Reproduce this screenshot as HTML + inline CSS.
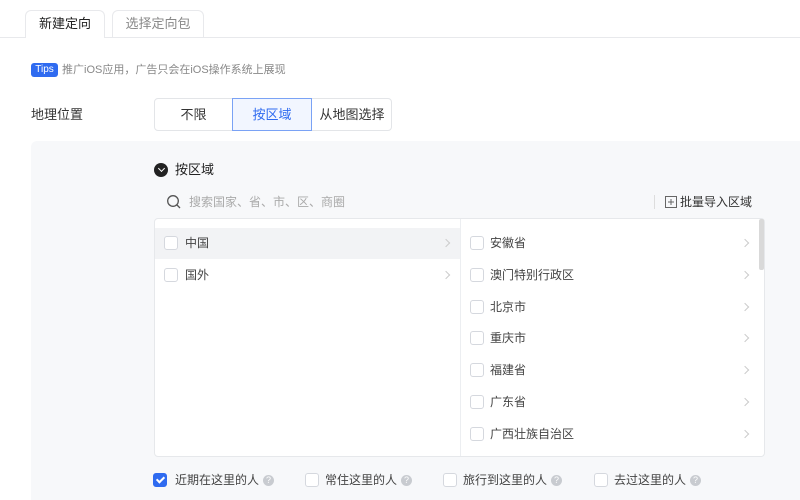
<!DOCTYPE html>
<html style="overflow:hidden;height:500px"><head><meta charset="utf-8"><style>
*{margin:0;padding:0;box-sizing:border-box}
body{width:800px;height:500px;overflow:hidden;background:#fff;font-family:"Liberation Sans","Noto Sans CJK SC",sans-serif;font-size:12px;color:#444;position:relative}
.a{position:absolute;white-space:nowrap}
.cb{position:absolute;width:14px;height:14px;border:1px solid #d5d8de;border-radius:3px;background:#fff}
.chev{position:absolute;width:6px;height:6px;border-top:1px solid #ccc;border-right:1px solid #ccc;transform:rotate(45deg)}
.q{display:inline-block;width:11px;height:11px;border-radius:50%;background:#c8cbd0;color:#fff;font-size:9px;line-height:11px;text-align:center;margin-left:4px;vertical-align:1px}
</style></head><body>
<div class="a" style="left:0;top:37px;width:800px;height:1px;background:#e8e9ec"></div>
<div class="a" style="left:25px;top:10px;width:80px;height:28px;border:1px solid #e8e9ec;border-bottom:none;border-radius:6px 6px 0 0;background:#fff;text-align:center;line-height:26px;font-size:13px;color:#222">新建定向</div>
<div class="a" style="left:112px;top:10px;width:92px;height:27px;border:1px solid #e8e9ec;border-bottom:none;border-radius:6px 6px 0 0;background:#fff;text-align:center;line-height:26px;font-size:13px;color:#888">选择定向包</div>
<div class="a" style="left:31px;top:63px;width:27px;height:14px;background:#2f6bf0;border-radius:3px;color:#fff;font-size:10px;line-height:14px;text-align:center">Tips</div>
<div class="a" style="left:62px;top:62px;font-size:11px;line-height:16px;color:#888">推广iOS应用，广告只会在iOS操作系统上展现</div>
<div class="a" style="left:31px;top:106px;font-size:13px;line-height:18px;color:#333">地理位置</div>
<div class="a" style="left:154px;top:98px;width:238px;height:33px;border:1px solid #e3e5e8;border-radius:4px"></div>
<div class="a" style="left:154px;top:98px;width:79px;height:33px;line-height:33px;text-align:center;font-size:13px;color:#333">不限</div>
<div class="a" style="left:232px;top:98px;width:80px;height:33px;line-height:31px;text-align:center;font-size:13px;border:1px solid #7aa2f5;background:#f2f6ff;color:#2f6bf0">按区域</div>
<div class="a" style="left:312px;top:98px;width:80px;height:33px;line-height:33px;text-align:center;font-size:13px;color:#333">从地图选择</div>
<div class="a" style="left:31px;top:141px;width:769px;height:359px;background:#f7f8fa;border-radius:6px 0 0 0"></div>
<div class="a" style="left:154px;top:163px;width:14px;height:14px;border-radius:50%;background:#222"></div>
<div class="a" style="left:158.5px;top:166px;width:5px;height:5px;border-right:1.5px solid #fff;border-bottom:1.5px solid #fff;transform:rotate(45deg)"></div>
<div class="a" style="left:175px;top:161px;font-size:13px;line-height:18px;color:#222">按区域</div>
<svg class="a" style="left:166px;top:194px" width="16" height="16" viewBox="0 0 16 16"><circle cx="7" cy="7" r="5.3" fill="none" stroke="#555" stroke-width="1.3"/><path d="M11 11l3 3" stroke="#555" stroke-width="1.3"/></svg>
<div class="a" style="left:189px;top:194px;font-size:12px;line-height:16px;color:#aaa">搜索国家、省、市、区、商圈</div>
<div class="a" style="left:654px;top:195px;width:1px;height:14px;background:#ddd"></div>
<svg class="a" style="left:665px;top:196px" width="12" height="12" viewBox="0 0 12 12"><rect x="0.5" y="0.5" width="11" height="11" fill="none" stroke="#666"/><path d="M6 3v6M3 6h6" stroke="#666"/></svg>
<div class="a" style="left:680px;top:194px;font-size:12px;line-height:16px;color:#333">批量导入区域</div>
<div class="a" style="left:154px;top:218px;width:611px;height:239px;background:#fff;border:1px solid #e6e8eb;border-radius:4px"></div>
<div class="a" style="left:460px;top:219px;width:1px;height:237px;background:#eceef1"></div>
<div class="a" style="left:759px;top:219px;width:5px;height:51px;background:#d9d9d9;border-radius:2px"></div>
<div class="a" style="left:155px;top:228px;width:305px;height:31px;background:#f2f3f5"></div>
<div class="cb" style="left:164px;top:236px"></div><div class="a" style="left:185px;top:235px;line-height:16px">中国</div><div class="chev" style="left:443px;top:240px"></div>
<div class="cb" style="left:164px;top:268px"></div><div class="a" style="left:185px;top:267px;line-height:16px">国外</div><div class="chev" style="left:443px;top:272px"></div>
<div class="cb" style="left:470px;top:236px"></div><div class="a" style="left:490px;top:235px;line-height:16px">安徽省</div><div class="chev" style="left:742px;top:240px"></div>
<div class="cb" style="left:470px;top:268px"></div><div class="a" style="left:490px;top:267px;line-height:16px">澳门特别行政区</div><div class="chev" style="left:742px;top:272px"></div>
<div class="cb" style="left:470px;top:300px"></div><div class="a" style="left:490px;top:299px;line-height:16px">北京市</div><div class="chev" style="left:742px;top:304px"></div>
<div class="cb" style="left:470px;top:331px"></div><div class="a" style="left:490px;top:330px;line-height:16px">重庆市</div><div class="chev" style="left:742px;top:335px"></div>
<div class="cb" style="left:470px;top:363px"></div><div class="a" style="left:490px;top:362px;line-height:16px">福建省</div><div class="chev" style="left:742px;top:367px"></div>
<div class="cb" style="left:470px;top:395px"></div><div class="a" style="left:490px;top:394px;line-height:16px">广东省</div><div class="chev" style="left:742px;top:399px"></div>
<div class="cb" style="left:470px;top:427px"></div><div class="a" style="left:490px;top:426px;line-height:16px">广西壮族自治区</div><div class="chev" style="left:742px;top:431px"></div>
<div class="cb" style="left:153px;top:473px;background:#2f6bf0;border-color:#2f6bf0"></div>
<div class="a" style="left:157.5px;top:475px;width:5px;height:8px;border-right:2px solid #fff;border-bottom:2px solid #fff;transform:rotate(45deg)"></div>
<div class="a" style="left:175px;top:472px;line-height:16px">近期在这里的人<span class="q">?</span></div>
<div class="cb" style="left:305px;top:473px"></div><div class="a" style="left:325px;top:472px;line-height:16px">常住这里的人<span class="q">?</span></div>
<div class="cb" style="left:443px;top:473px"></div><div class="a" style="left:463px;top:472px;line-height:16px">旅行到这里的人<span class="q">?</span></div>
<div class="cb" style="left:594px;top:473px"></div><div class="a" style="left:614px;top:472px;line-height:16px">去过这里的人<span class="q">?</span></div>
</body></html>
